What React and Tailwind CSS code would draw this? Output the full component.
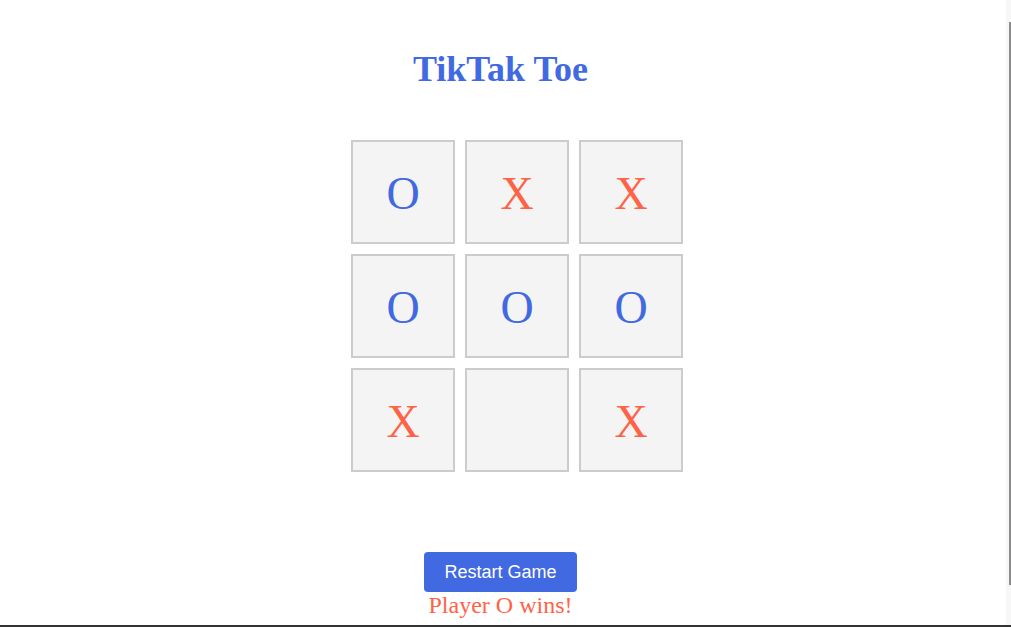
import React, { useState } from 'react';

const initialBoard = ['O', 'X', 'X', 'O', 'O', 'O', 'X', null, 'X'];

const App = () => {
  const [board, setBoard] = useState(initialBoard);

  const handleRestart = () => {
    setBoard(Array(9).fill(null));
  };

  return (
    <div className="relative min-h-screen w-full bg-white overflow-hidden">
      <div className="flex flex-col items-center w-[1001px] pt-[49px]">
        <h1 className="text-[36px] leading-[40px] font-bold text-[#4169e1] font-['Liberation_Serif',serif]">
          TikTak Toe
        </h1>

        <div className="mt-[51px] ml-[33px] grid grid-cols-[repeat(3,104px)] gap-[10px]">
          {board.map((cell, i) => (
            <div
              key={i}
              className="w-[104px] h-[104px] pt-[4px] border-2 border-[#cccccc] bg-[#f4f4f4] flex items-center justify-center font-['Liberation_Serif',serif] text-[46px] leading-none"
            >
              {cell === 'O' && <span className="text-[#4169e1]">O</span>}
              {cell === 'X' && <span className="text-[#ff6347]">X</span>}
            </div>
          ))}
        </div>

        <button
          onClick={handleRestart}
          className="mt-[80px] px-5 py-[10px] rounded bg-[#4169e1] text-white text-[18px] leading-5 font-['Liberation_Sans',Arial,sans-serif]"
        >
          Restart Game
        </button>
        <p className="text-[24px] leading-[27px] text-[#ff6347] font-['Liberation_Serif',serif]">
          Player O wins!
        </p>
      </div>

      {/* window edge bits from the screenshot */}
      <div className="fixed top-0 right-0 w-[5px] h-full bg-[#f7f7f7]" />
      <div className="fixed top-[22px] right-0 w-[2px] h-[563px] bg-[#8c8c8c]" />
      <div className="fixed bottom-0 left-0 w-full h-[2px] bg-[#333333]" />
    </div>
  );
};

export default App;
